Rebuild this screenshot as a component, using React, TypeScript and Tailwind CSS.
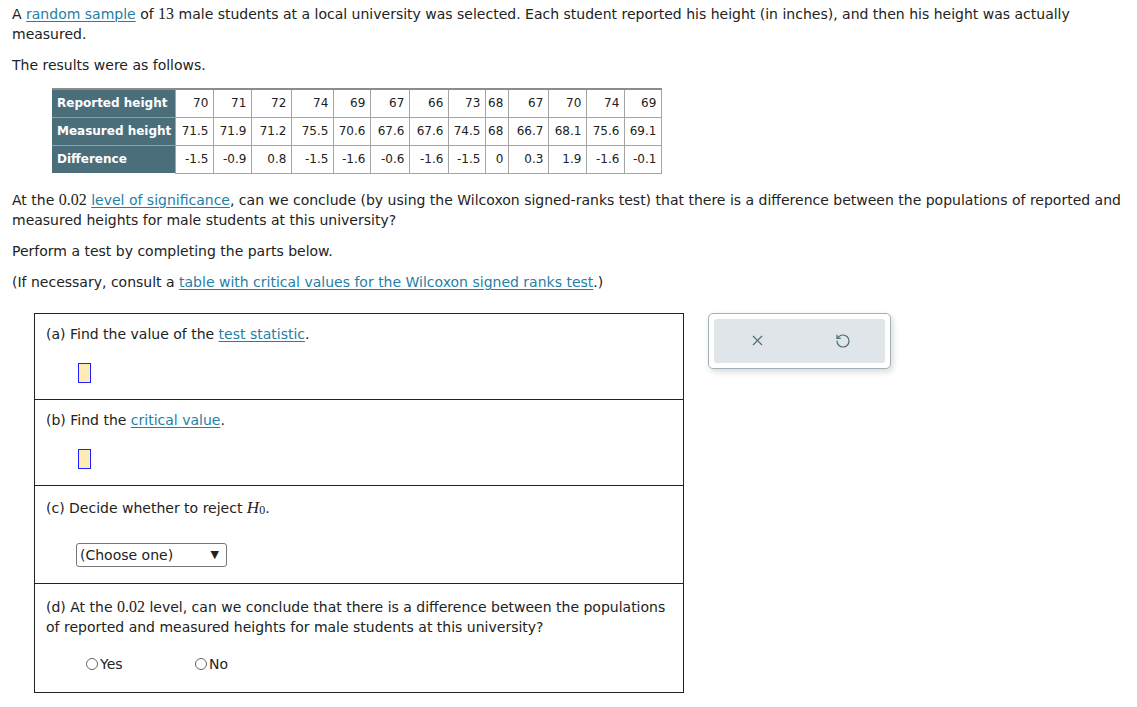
import { X, RotateCcw } from 'lucide-react'

const reported = ['70', '71', '72', '74', '69', '67', '66', '73', '68', '67', '70', '74', '69']
const measured = ['71.5', '71.9', '71.2', '75.5', '70.6', '67.6', '67.6', '74.5', '68', '66.7', '68.1', '75.6', '69.1']
const diffs = ['-1.5', '-0.9', '0.8', '-1.5', '-1.6', '-0.6', '-1.6', '-1.5', '0', '0.3', '1.9', '-1.6', '-0.1']
const widths = ['w-[38px]', 'w-[38px]', 'w-[40px]', 'w-[42px]', 'w-[37px]', 'w-[39px]', 'w-[39px]', 'w-[37px]', 'w-[23px]', 'w-[40px]', 'w-[38px]', 'w-[38px]', 'w-[37px]']

const Link = ({ children }: { children: React.ReactNode }) => (
  <span className="text-[#1f7fa6] underline underline-offset-2 decoration-1">{children}</span>
)

const Num = ({ children }: { children: React.ReactNode }) => (
  <span className="font-['Liberation_Serif',serif] text-[16px] leading-[16px]">{children}</span>
)

const AnswerBox = () => (
  <div className="ml-[32px] w-[13px] h-[20px] bg-[#fdedb4] border border-[#1f1fff]" />
)

function Row({ label, values, last }: { label: string; values: string[]; last?: boolean }) {
  return (
    <tr className="h-[28px]">
      <th
        className={`bg-[#4b6e7b] text-white font-bold text-left whitespace-nowrap pl-[5px] pr-[4px] w-[122px] ${
          last ? '' : 'border-b border-[#8aa2ab]'
        }`}
      >
        {label}
      </th>
      {values.map((v, i) => (
        <td key={i} className={`${widths[i]} text-right whitespace-nowrap pr-[5px] border border-[#a5a5a5]`}>
          {v}
        </td>
      ))}
    </tr>
  )
}

export default function App() {
  return (
    <div className="font-['DejaVu_Sans',Verdana,sans-serif] text-[14px] leading-[20px] text-[#222] pl-[12px] pt-[4px] bg-white min-h-[707px]">
      <p>
        A <Link>random sample</Link> of <Num>13</Num> male students at a local university was selected. Each student
        reported his height (in inches), and then his height was actually measured.
      </p>
      <p className="mt-[11px]">The results were as follows.</p>

      <div className="ml-[40px] mt-[13px]">
        <table className="border-collapse border-t-2 border-t-[#8c8c8c] text-[12px] leading-[14px]">
          <tbody>
            <Row label="Reported height" values={reported} />
            <Row label="Measured height" values={measured} />
            <Row label="Difference" values={diffs} last />
          </tbody>
        </table>
      </div>

      <p className="mt-[16px] pr-[4px]">
        At the <Num>0.02</Num> <Link>level of significance</Link>, can we conclude (by using the Wilcoxon signed-ranks
        test) that there is a difference between the populations of reported and measured heights for male students at
        this university?
      </p>
      <p className="mt-[11px]">Perform a test by completing the parts below.</p>
      <p className="mt-[11px]">
        (If necessary, consult a <Link>table with critical values for the Wilcoxon signed ranks test</Link>.)
      </p>

      <div className="flex items-start mt-[21px] ml-[22px] gap-[24px]">
        <div className="w-[650px] border border-[#222]">
          <div className="h-[86px] pl-[11px] pt-[10px] border-b border-[#222]">
            <p>
              (a) Find the value of the <Link>test statistic</Link>.
            </p>
            <div className="mt-[19px]">
              <AnswerBox />
            </div>
          </div>
          <div className="h-[86px] pl-[11px] pt-[10px] border-b border-[#222]">
            <p>
              (b) Find the <Link>critical value</Link>.
            </p>
            <div className="mt-[19px]">
              <AnswerBox />
            </div>
          </div>
          <div className="h-[98px] pl-[11px] pt-[12px] border-b border-[#222]">
            <p>
              (c) Decide whether to reject{' '}
              <span className="font-['Liberation_Serif',serif] italic text-[17px]">H</span>
              <sub className="font-['Liberation_Serif',serif] text-[12px] relative top-[1px]">0</sub>.
            </p>
            <div className="mt-[25px] ml-[30px] w-[151px] h-[24px] border border-[#777] rounded-[3px] flex items-center justify-between pl-[3px] pr-[7px]">
              <span>(Choose one)</span>
              <span className="text-[11px]">▼</span>
            </div>
          </div>
          <div className="h-[108px] pl-[11px] pt-[13px]">
            <p>
              (d) At the <Num>0.02</Num> level, can we conclude that there is a difference between the populations
              <br />
              of reported and measured heights for male students at this university?
            </p>
            <div className="flex mt-[17px] ml-[40px]">
              <label className="flex items-center w-[109px]">
                <span className="w-[12px] h-[12px] rounded-full border border-[#666] mr-[2px]" />
                Yes
              </label>
              <label className="flex items-center">
                <span className="w-[12px] h-[12px] rounded-full border border-[#666] mr-[2px]" />
                No
              </label>
            </div>
          </div>
        </div>

        <div className="w-[183px] h-[56px] border border-[#9fb1b8] rounded-[5px] p-[5px] bg-white shadow-[2px_3px_6px_rgba(0,0,0,0.15)]">
          <div className="h-full bg-[#dfe5e8] rounded-[3px] flex items-center justify-around text-[#4b6d7a]">
            <X size={17} strokeWidth={1.6} />
            <RotateCcw size={16} strokeWidth={1.8} />
          </div>
        </div>
      </div>
    </div>
  )
}
